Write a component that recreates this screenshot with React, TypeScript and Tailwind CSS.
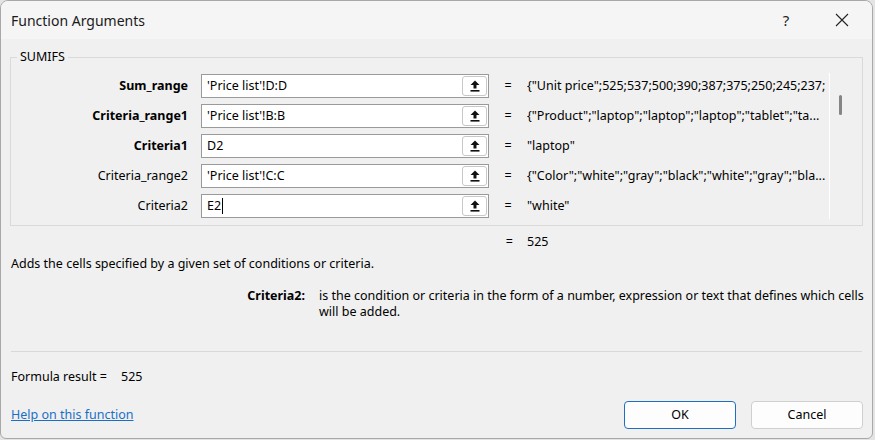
import React from "react"

const args = [
  { name: "Sum_range", bold: true, value: "'Price list'!D:D", result: '{"Unit price";525;537;500;390;387;375;250;245;237;' },
  { name: "Criteria_range1", bold: true, value: "'Price list'!B:B", result: '{"Product";"laptop";"laptop";"laptop";"tablet";"ta...' },
  { name: "Criteria1", bold: true, value: "D2", result: '"laptop"' },
  { name: "Criteria_range2", bold: false, value: "'Price list'!C:C", result: '{"Color";"white";"gray";"black";"white";"gray";"bla...' },
  { name: "Criteria2", bold: false, value: "E2", result: '"white"', caret: true },
]

const PickIcon = () => (
  <svg width="10" height="12" viewBox="0 0 10 12">
    <path d="M5 0.5 L9.5 5 L6.5 5 L6.5 8.5 L3.5 8.5 L3.5 5 L0.5 5 Z" fill="#111" />
    <rect x="0.5" y="10" width="9" height="1.6" fill="#111" />
  </svg>
)

const ArgRow = ({ name, bold, value, result, caret }: { name: string; bold: boolean; value: string; result: string; caret?: boolean }) => (
  <div className="flex items-center h-[24px]">
    <div className={`w-[190px] shrink-0 text-right pr-[13px] ${bold ? "font-bold" : ""}`}>{name}</div>
    <div className="flex items-center w-[288px] shrink-0 h-[24px] bg-white border border-[#9a9a9a] pl-[5px] pr-[1px]">
      <div className="flex-1 flex items-center">
        {value}
        {caret && <span className="inline-block w-px h-[16px] bg-black ml-px" />}
      </div>
      <div className="flex items-center justify-center w-[25px] h-[20px] border border-[#c8c8c8] rounded-[3px] bg-white">
        <PickIcon />
      </div>
    </div>
    <div className="w-[38px] shrink-0 text-center">=</div>
    <div className="whitespace-nowrap">{result}</div>
  </div>
)

export default function App() {
  return (
    <div className="w-[875px] h-[440px] bg-[#e4e4e4] text-[12.5px] text-black" style={{ fontFamily: '"Noto Sans", "Open Sans", sans-serif' }}>
      <div className="w-[873px] h-[439px] rounded-t-lg rounded-b-md border border-[#a8a8a8] bg-[#f0f0f0] flex flex-col overflow-hidden">
        {/* title bar */}
        <div className="h-[38px] flex items-center bg-[#f5f5f5] pl-[10px]">
          <div className="flex-1 text-[14px] text-[#1a1a1a]">Function Arguments</div>
          <div className="w-[56px] text-center text-[15px] text-[#222]">?</div>
          <div className="w-[56px] flex justify-center mr-[2px]">
            <svg width="14" height="14" viewBox="0 0 14 14">
              <path d="M1 1 L13 13 M13 1 L1 13" stroke="#222" strokeWidth="1.1" />
            </svg>
          </div>
        </div>

        {/* argument group */}
        <div className="relative mx-[9px] mt-[18px] h-[169px] border border-[#dadada]">
          <span className="absolute -top-[10px] left-[6px] px-[3px] bg-[#f0f0f0] leading-[18px]">SUMIFS</span>
          <div className="flex">
            <div className="flex flex-col gap-[6px] pt-[16px] w-[818px] overflow-hidden">
              {args.map((a) => (
                <ArgRow key={a.name} {...a} />
              ))}
            </div>
            <div className="relative mt-[15px] h-[146px] border-l border-white w-[20px]">
              <div className="absolute left-[9px] top-[22px] w-[3px] h-[20px] rounded-full bg-[#858585]" />
            </div>
          </div>
        </div>

        <div className="flex h-[32px] items-center">
          <div className="w-[512px] text-right">=</div>
          <div className="pl-[14px]">525</div>
        </div>

        <div className="pl-[10px] leading-[16px] -mt-[2px]">Adds the cells specified by a given set of conditions or criteria.</div>

        <div className="flex mt-[16px] leading-[16px]">
          <div className="w-[304px] shrink-0 text-right font-bold">Criteria2:</div>
          <div className="pl-[14px] w-[562px] shrink-0">
            is the condition or criteria in the form of a number, expression or text that defines which cells will be added.
          </div>
        </div>

        <div className="mx-[10px] mt-[31px] border-t border-[#d9d9d9]" />

        <div className="flex pl-[10px] mt-[17px] leading-[16px]">
          <span className="w-[110px]">Formula result =</span>
          <span>525</span>
        </div>

        <div className="flex items-center pl-[10px] pr-[9px] mt-[16px]">
          <a className="flex-1 text-[#1a6fc4] underline">Help on this function</a>
          <button className="w-[112px] h-[28px] rounded-[4px] border border-[#1f6fc0] bg-[#fdfdfd] mr-[15px]">OK</button>
          <button className="w-[112px] h-[28px] rounded-[4px] border border-[#cfcfcf] bg-[#fdfdfd]">Cancel</button>
        </div>
      </div>
    </div>
  )
}
